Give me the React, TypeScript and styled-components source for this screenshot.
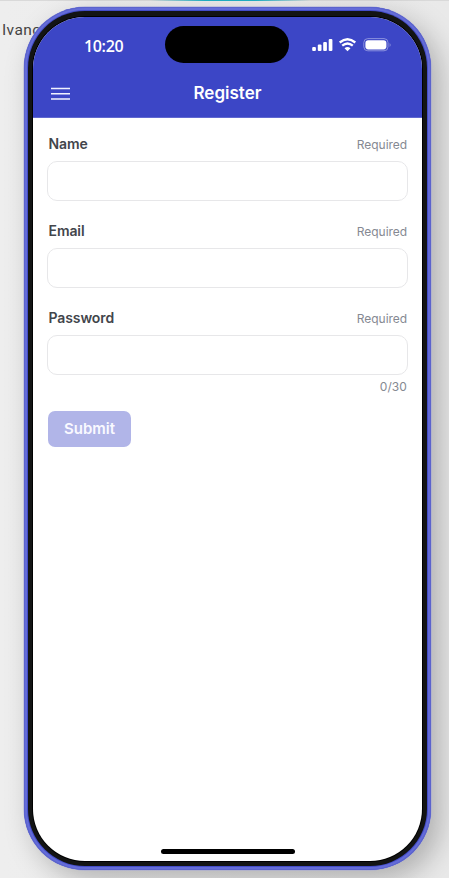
import React from "react";
import styled, { createGlobalStyle } from "styled-components";

const GlobalStyle = createGlobalStyle`
  * { box-sizing: border-box; }
  html, body { margin: 0; padding: 0; overflow: hidden; }
  body { font-family: Inter, "Liberation Sans", sans-serif; }
`;

const Page = styled.main`
  position: relative;
  width: 449px;
  height: 878px;
  padding: 7px 0 0 24px;
  overflow: hidden;
  background: linear-gradient(90deg, #eeeeee, #e9e9e9);
`;

const TopLine = styled.div`
  position: absolute;
  inset: 0 0 auto;
  height: 1px;
  background: linear-gradient(90deg, #d9d9d9 0, #d9d9d9 150px, #20afc4 205px, #20afc4 255px, #d9d9d9 310px);
`;

const Owner = styled.span`
  position: absolute;
  left: 2px;
  top: 20px;
  font: 400 15.5px/20px Roboto, sans-serif;
  letter-spacing: 0.4px;
  color: #444;
`;

const Phone = styled.div`
  position: relative;
  width: 407px;
  height: 863px;
  padding: 4px;
  border-radius: 61px;
  background: #434cc8;
  box-shadow: inset 0 0 0 1px #5b63cc, inset 0 0 0 3px #646cd8, 0 0 0 0.5px #a5a8d8,
    9px 10px 28px rgba(0, 0, 0, 0.25);
`;

const Bezel = styled.div`
  height: 100%;
  padding: 6px 5px 5px;
  border-radius: 57px;
  background: #131414;
`;

const Screen = styled.div`
  display: flex;
  flex-direction: column;
  height: 844px;
  width: 389px;
  border-radius: 52px;
  overflow: hidden;
  background: #fff;
  box-shadow: 0 0 0 1px #000;
`;

const Header = styled.header`
  height: 101px;
  flex: none;
  background: #3c46c6;
  border-bottom: 1px solid #6068d0;
  color: #fff;
`;

const StatusBar = styled.div`
  display: grid;
  grid-template-columns: 132px 124px 1fr;
  height: 56px;
  padding-top: 9px;
`;

const Clock = styled.time`
  padding: 9px 0 0 51px;
  font: 600 16px/22px "Open Sans", "Noto Sans", sans-serif;
  letter-spacing: -0.35px;
`;

const Island = styled.div`
  height: 37px;
  border-radius: 19px;
  background: #000;
`;

const StatusIcons = styled.svg`
  width: 84px;
  height: 20px;
  margin: 9px 0 0 20px;
`;

const NavBar = styled.div`
  display: grid;
  grid-template-columns: 52px 1fr 52px;
  height: 40px;
`;

const MenuIcon = styled.svg`
  width: 20px;
  height: 16px;
  margin: 13px 0 0 18px;
`;

const Title = styled.h1`
  margin: 0;
  padding-top: 9px;
  text-align: center;
  font-size: 17px;
  font-weight: 600;
  line-height: 22px;
  letter-spacing: 0;
`;

const Form = styled.form`
  padding: 16px 14px 0;
`;

const Field = styled.div`
  height: 87px;
`;

const FieldHead = styled.div`
  display: flex;
  justify-content: space-between;
  height: 27px;
  padding: 0 1px 0 1.5px;
  line-height: 19px;
`;

const Label = styled.label`
  font-size: 14px;
  font-weight: 600;
  letter-spacing: -0.1px;
  color: #42454b;
`;

const Hint = styled.span`
  padding-top: 1px;
  font-size: 12px;
  letter-spacing: -0.05px;
  color: #858992;
`;

const Input = styled.input`
  display: block;
  width: 361px;
  height: 40px;
  border: 1px solid #e7e7e9;
  border-radius: 10px;
  background: #fff;
  outline: none;
`;

const Counter = styled.div`
  height: 31px;
  margin-top: -15px;
  padding-right: 1px;
  text-align: right;
  font-size: 12px;
  line-height: 14px;
  letter-spacing: 0.1px;
  color: #858992;
`;

const Submit = styled.button`
  display: block;
  width: 83px;
  height: 36px;
  margin: 0 0 0 1px;
  padding: 0;
  border: 0;
  border-radius: 7px;
  background: #b1b5e8;
  color: #f9f9ff;
  font: 600 15px/36px Inter, sans-serif;
`;

const HomeBar = styled.div`
  width: 134px;
  height: 5px;
  margin: auto 0 7px 128px;
  flex: none;
  border-radius: 3px;
  background: #000;
`;

const fields = ["Name", "Email", "Password"];

export default function App() {
  return (
    <Page>
      <GlobalStyle />
      <TopLine />
      <Owner>Ivano</Owner>
      <Phone>
        <Bezel>
          <Screen>
            <Header>
              <StatusBar>
                <Clock>10:20</Clock>
                <Island />
                <StatusIcons viewBox="0 0 84 20" fill="#fff">
                  <rect x="3.2" y="12" width="3.7" height="4" rx="1.1" />
                  <rect x="8.8" y="9.5" width="3.7" height="6.5" rx="1.1" />
                  <rect x="14.2" y="7" width="3.7" height="9" rx="1.1" />
                  <rect x="19.7" y="4" width="3.7" height="12" rx="1.1" />
                  <path d="M30.7 7.5Q38.5 1 46.3 7.5M33.2 10.7Q38.5 6.2 43.8 10.7" fill="none" stroke="#fff" strokeWidth="2.3" />
                  <path d="M35.5 13.2Q38.5 10.8 41.5 13.2L38.5 16.2Z" />
                  <rect x="54.8" y="3.6" width="24.2" height="12.2" rx="4" fill="none" stroke="#8b91de" />
                  <rect x="56.4" y="5.2" width="21" height="9.2" rx="2.8" />
                  <path d="M80.6 8Q82.6 10 80.6 12Z" fill="#8b91de" />
                </StatusIcons>
              </StatusBar>
              <NavBar>
                <MenuIcon viewBox="0 0 20 16" fill="none" stroke="#f1f2ff" strokeWidth="1.6">
                  <path d="M0 2.5H19M0 7.8H19M0 13H19" />
                </MenuIcon>
                <Title>Register</Title>
              </NavBar>
            </Header>
            <Form>
              {fields.map((name) => (
                <Field key={name}>
                  <FieldHead>
                    <Label htmlFor={name}>{name}</Label>
                    <Hint>Required</Hint>
                  </FieldHead>
                  <Input id={name} type={name === "Password" ? "password" : "text"} />
                </Field>
              ))}
              <Counter>0/30</Counter>
              <Submit type="button" disabled>Submit</Submit>
            </Form>
            <HomeBar />
          </Screen>
        </Bezel>
      </Phone>
    </Page>
  );
}
